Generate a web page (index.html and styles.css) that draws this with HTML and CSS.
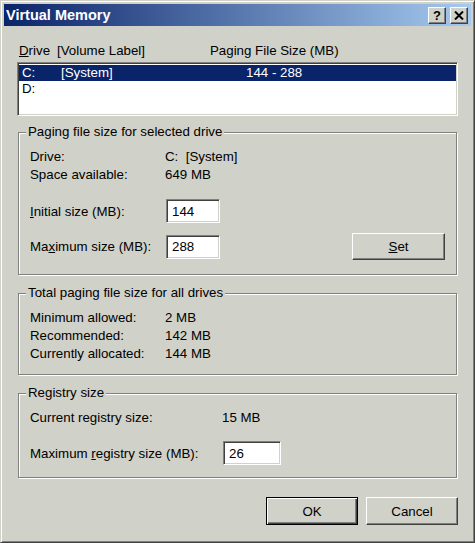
FILE: index.html
```html
<!DOCTYPE html>
<html lang="en">
<head>
    <meta charset="UTF-8">
    <title>Virtual Memory</title>
    <link rel="stylesheet" href="styles.css">
</head>
<body>
    <div class="window">
        <div class="titlebar">
            <div class="title">Virtual Memory</div>
            <div class="title-buttons">
                <div class="tb-btn help">?</div>
                <div class="tb-btn close">
                    <svg width="10" height="9" viewBox="0 0 10 9">
                        <path d="M1 0.5 L9 8.5 M9 0.5 L1 8.5" stroke="#000" stroke-width="2" fill="none"/>
                    </svg>
                </div>
            </div>
        </div>

        <div class="dialog-body">
            <div class="list-header">
                <span class="col-drive"><u>D</u>rive</span>
                <span class="col-label">[Volume Label]</span>
                <span>Paging File Size (MB)</span>
            </div>
            <div class="listbox">
                <div class="list-row selected">
                    <span class="cell-drive">C:</span>
                    <span class="cell-label">[System]</span>
                    <span>144 - 288</span>
                </div>
                <div class="list-row">
                    <span class="cell-drive">D:</span>
                </div>
            </div>

            <fieldset class="group group-selected">
                <legend>Paging file size for selected drive</legend>
                <div class="info">
                    <span>Drive:</span><span>C:&nbsp; [System]</span>
                    <span>Space available:</span><span>649 MB</span>
                </div>
                <div class="field first">
                    <label class="field-label"><u>I</u>nitial size (MB):</label>
                    <input class="text-input" type="text" value="144">
                </div>
                <div class="field second">
                    <label class="field-label">Ma<u>x</u>imum size (MB):</label>
                    <input class="text-input" type="text" value="288">
                    <button class="btn set-btn"><u>S</u>et</button>
                </div>
            </fieldset>

            <fieldset class="group group-total">
                <legend>Total paging file size for all drives</legend>
                <div class="info">
                    <span>Minimum allowed:</span><span>2 MB</span>
                    <span>Recommended:</span><span>142 MB</span>
                    <span>Currently allocated:</span><span>144 MB</span>
                </div>
            </fieldset>

            <fieldset class="group group-registry">
                <legend>Registry size</legend>
                <div class="info wide">
                    <span>Current registry size:</span><span>15 MB</span>
                </div>
                <div class="field registry-field">
                    <label class="field-label wide">Maximum <u>r</u>egistry size (MB):</label>
                    <input class="text-input" type="text" value="26">
                </div>
            </fieldset>

            <div class="buttons">
                <button class="btn default">OK</button>
                <button class="btn">Cancel</button>
            </div>
        </div>
    </div>
</body>
</html>
```

FILE: styles.css
```css
:root {
    --face: #d0d1c8;
    --shadow: #808080;
    --dark: #404040;
    --hilite: #ffffff;
    --navy: #0a246a;
}

* {
    margin: 0;
    padding: 0;
    box-sizing: border-box;
}

body {
    background: var(--face);
    font-family: "Liberation Sans", Arial, sans-serif;
    font-size: 13.3px;
    color: #000;
}

.window {
    width: 475px;
    height: 543px;
    border: 1px solid;
    border-color: var(--face) var(--dark) var(--dark) var(--face);
    box-shadow: inset 1px 1px 0 var(--hilite), inset -1px -1px 0 var(--shadow);
    padding: 3px;
}

/* title bar */
.titlebar {
    height: 22px;
    display: flex;
    align-items: center;
    padding: 0 3px 0 2px;
    background: linear-gradient(90deg, #0a246a, #a6caf0);
}

.title {
    flex: 1;
    color: #fff;
    font-weight: bold;
    font-size: 14.5px;
}

.title-buttons {
    display: flex;
    gap: 4px;
    margin-top: 1px;
}

.tb-btn {
    width: 18px;
    height: 17px;
    background: var(--face);
    border: 1px solid;
    border-color: var(--hilite) var(--dark) var(--dark) var(--hilite);
    box-shadow: inset -1px -1px 0 var(--shadow);
    display: flex;
    align-items: center;
    justify-content: center;
    font-weight: bold;
    font-size: 13px;
    line-height: 1;
}

/* body */
.dialog-body {
    padding: 17px 13px 0 13px;
}

.list-header {
    display: flex;
    height: 15px;
    line-height: 15px;
    padding-left: 2px;
}

.col-drive { width: 38px; }
.col-label { width: 153px; }

.listbox {
    margin-top: 4px;
    height: 54px;
    background: #fff;
    border: 1px solid;
    border-color: var(--shadow) var(--hilite) var(--hilite) var(--shadow);
    box-shadow: inset 1px 1px 0 var(--dark), inset -1px -1px 0 var(--face);
    padding: 2px 1px;
}

.list-row {
    display: flex;
    height: 16px;
    line-height: 16px;
    padding-left: 3px;
}

.list-row.selected {
    background: var(--navy);
    color: #fff;
}

.cell-drive { width: 39px; }
.cell-label { width: 185px; }

/* group boxes */
.group {
    margin: 10px 1px 0 1px;
    border: 1px solid var(--shadow);
    box-shadow: inset 1px 1px 0 var(--hilite), 1px 1px 0 var(--hilite);
    padding: 8px 11px 11px 11px;
}

.group-selected {
    margin-top: 8px;
    padding-bottom: 14px;
}

.group-registry {
    padding-bottom: 12px;
}

.group legend {
    line-height: 16px;
    padding: 0 2px;
    margin-left: -4px;
    background: var(--face);
}

.info {
    display: grid;
    grid-template-columns: 135px auto;
    line-height: 18px;
}

.info.wide {
    grid-template-columns: 192px auto;
}

.field {
    display: flex;
    align-items: center;
}

.field.first { margin-top: 15px; }
.field.second { margin-top: 10px; height: 27px; }
.registry-field { margin-top: 14px; }

.field-label { width: 136px; }
.field-label.wide { width: 193px; }

.text-input {
    width: 54px;
    height: 24px;
    font: inherit;
    padding-left: 5px;
    background: #fff;
    border: 1px solid;
    border-color: var(--shadow) var(--hilite) var(--hilite) var(--shadow);
    box-shadow: inset 1px 1px 0 var(--dark), inset -1px -1px 0 var(--face);
    outline: none;
}

.registry-field .text-input { width: 58px; }

/* buttons */
.btn {
    width: 92px;
    height: 28px;
    font: inherit;
    color: #000;
    background: var(--face);
    border: 1px solid;
    border-color: var(--hilite) var(--dark) var(--dark) var(--hilite);
    box-shadow: inset -1px -1px 0 var(--shadow);
}

.set-btn {
    width: 93px;
    height: 27px;
    margin-left: auto;
}

.btn.default {
    border: 1px solid #000;
    box-shadow: inset 1px 1px 0 var(--hilite), inset -1px -1px 0 var(--dark), inset -2px -2px 0 var(--shadow);
}

.buttons {
    display: flex;
    justify-content: flex-end;
    gap: 8px;
    margin-top: 19px;
}
```
